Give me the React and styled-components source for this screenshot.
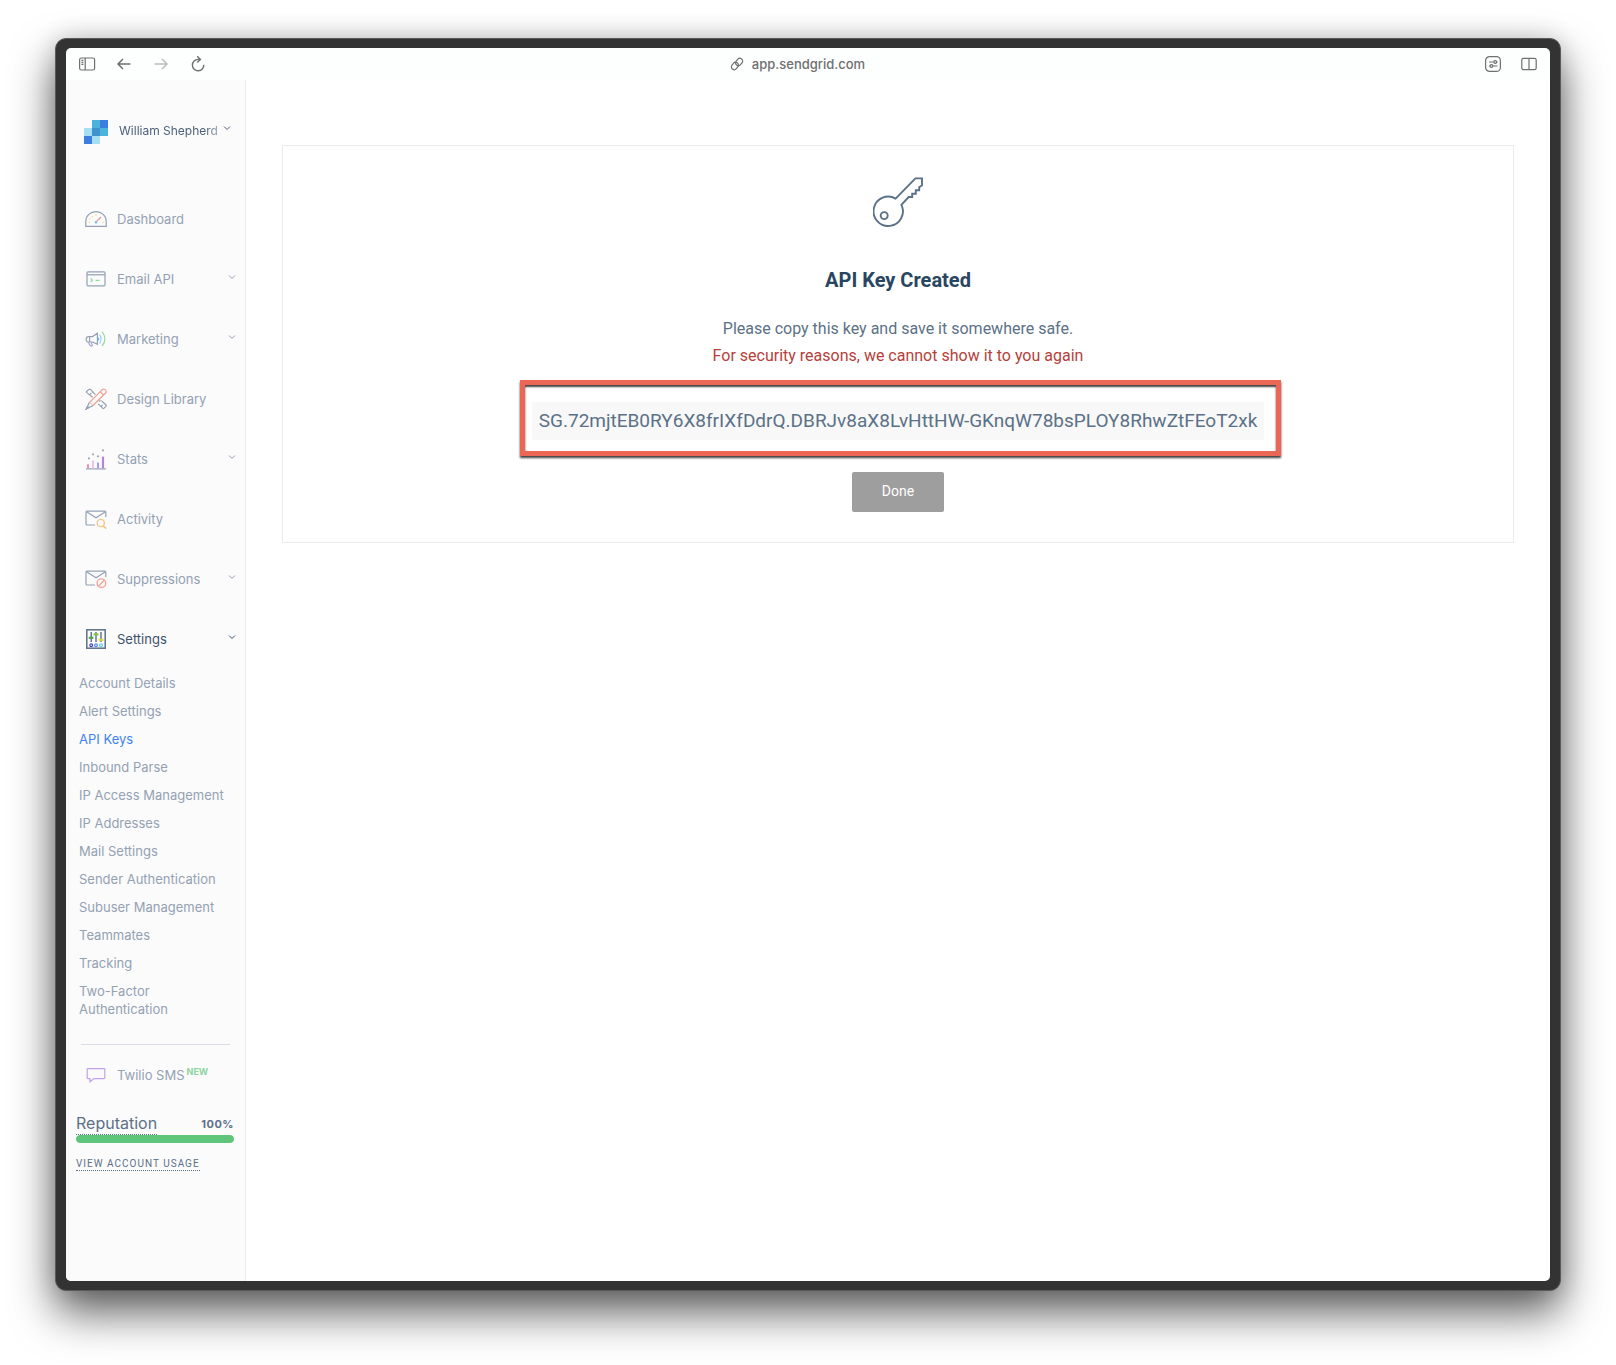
import styled, { createGlobalStyle } from "styled-components";

const colors = {
    text: "#5b7187",
    title: "#294661",
    muted: "#94a1b2",
    line: "#e9ebee",
    link: "#3f83f0",
    danger: "#b7403b",
    green: "#5ec57a",
    chrome: "#6f6f6f",
};

const GlobalStyle = createGlobalStyle`
    *{
        box-sizing: border-box;
    }

    body{
        margin: 0;
        background: #fff;
        color: ${colors.text};
        font-family: Inter, "Liberation Sans", sans-serif;
        font-size: 13px;
        line-height: 18px;
    }

    a{
        color: inherit;
        text-decoration: none;
    }

    button{
        font: inherit;
        color: inherit;
        border: 0;
        padding: 0;
        background: none;
        cursor: pointer;
    }
`;

/* ---------- icons ---------- */

function Icon({ size = 22, children, ...rest }) {
    return (
        <svg
            width={size}
            height={size}
            viewBox={`0 0 ${size} ${size}`}
            fill="none"
            stroke="currentColor"
            strokeWidth="1.2"
            aria-hidden="true"
            {...rest}
        >
            {children}
        </svg>
    );
}

function Chevron() {
    return (
        <svg width="8" height="6" viewBox="0 0 8 6" fill="none" stroke="currentColor" strokeWidth="1" aria-hidden="true">
            <path d="M1 1.500l3 3 3-3" />
        </svg>
    );
}

function DashboardIcon() {
    return (
        <Icon>
            <path d="M.8 18.4v-5C.8 7.6 5.4 3.7 11 3.7s10.2 3.9 10.2 9.7v5z" />
            <path d="M3.6 14.4h1.2M4.4 10.8l1.1.5M6.8 8l.8.9M11 6.2v1.6M18.4 14.4h-1.2" stroke="#f8d27a" />
            <path d="M11.6 13.4L16 9" stroke="#f0938a" />
            <circle cx="11" cy="14.3" r="1" fill="#7db0f7" stroke="#7db0f7" strokeWidth=".6" />
        </Icon>
    );
}

function EmailApiIcon() {
    return (
        <Icon>
            <rect x="2" y="3.8" width="18" height="14" rx="1" />
            <path d="M2 6.8h18" />
            <path d="M5.6 10.2l1.8 2-1.8 2M10.6 12.4h4" stroke="#8edb9f" />
        </Icon>
    );
}

function MarketingIcon() {
    return (
        <Icon>
            <path d="M12.4 5.2v11.2L7.6 14H3.4a2.2 2.2 0 0 1-2.2-2.4v-.8a2.2 2.2 0 0 1 2.2-2.2h4.2z" />
            <path d="M4.6 8.8V14" />
            <path d="M3.6 14c.2 2 1.2 3.8 3.2 4.2l.6-.8c-.8-.8-1-2-.8-3.2" stroke="#a5a5d8" />
            <path d="M13 9.6v2.8" stroke="#6ea5f6" strokeWidth="1.8" />
            <path d="M14.6 6.6c1.8 2.8 1.8 6.2 0 9" stroke="#9ad0f4" />
            <path d="M17 3.6c3.6 4.6 3.6 10.2 0 14.6" stroke="#8edb9f" />
        </Icon>
    );
}

function DesignIcon() {
    return (
        <Icon>
            <path d="M7.6 9.2L1.8 4.6c-.5-.5-.5-.9 0-1.300L4 1.400c.5-.4 1-.4 1.400 0l5 5.200M4.400 6.800l1.800-1.600M13.200 15.800l4.400 4.400c.5.5 1 .5 1.500 0l1.800-1.900c.5-.5.5-1 0-1.500l-4.600-4.200M16 18.600l1.600-1.800M14 13.600l1.400-1.400M7 4.600l1.200-1.200" />
            <path d="M17 1.800L4.400 14.600l3.200 3.200L20.600 5c.8-.9.8-2 0-3s-2.600-1-3.600-.2zM15.200 3.600l3.400 3.400" stroke="#f0a090" fill="#fbfbfc" />
            <path d="M4.400 14.600L1.200 21l6.400-3.200" fill="#fbfbfc" />
            <path d="M1.200 21l1.400-2.600 1.200 1.200z" />
        </Icon>
    );
}

function StatsIcon() {
    return (
        <Icon>
            <path d="M1 20.9h20" stroke="#94a1b2" />
            <path d="M3 20.4v-4.2" stroke="#ee8fb2" strokeWidth="2" />
            <path d="M8 20.4v-8" stroke="#e6c4ee" strokeWidth="2" />
            <path d="M13 20.4v-6" stroke="#a598f7" strokeWidth="2" />
            <path d="M18 20.4V8.6" stroke="#b586d0" strokeWidth="2.2" />
            <path d="M3 10.4h1.8M7.1 6.4h1.8M12.1 8.4h1.8M17.1 2.4h1.8" strokeWidth="1.6" />
        </Icon>
    );
}

function MailBase() {
    return (
        <>
            <path d="M10 17H2c-.6 0-1-.4-1-1V4.2c0-.6.4-1 1-1h17.8c.6 0 1 .4 1 1V9" />
            <path d="M1.6 3.8L11 9.8l9.400-6" />
        </>
    );
}

function ActivityIcon() {
    return (
        <Icon>
            <MailBase />
            <circle cx="15.8" cy="15" r="3.6" stroke="#f3c98a" strokeWidth="1.4" />
            <path d="M18.2 17.6l3 3" stroke="#f3c98a" strokeWidth="1.6" />
        </Icon>
    );
}

function SuppressionsIcon() {
    return (
        <Icon>
            <MailBase />
            <circle cx="16.4" cy="15.2" r="4.3" stroke="#f2a594" strokeWidth="1.4" />
            <path d="M13.4 18.2l6-6" stroke="#f2a594" strokeWidth="1.4" />
        </Icon>
    );
}

function SettingsIcon() {
    return (
        <Icon>
            <rect x="1.8" y="1.8" width="18.4" height="18.4" stroke="#5d7288" strokeWidth="1.5" />
            <path d="M6.2 4v10M11 4v10M16 4v10" stroke="#42586f" strokeWidth="1.2" />
            <path d="M3.8 9.8h4.6" stroke="#4ea557" strokeWidth="2.2" />
            <path d="M8.6 6.4h4.8" stroke="#86c440" strokeWidth="2.2" />
            <path d="M13.6 11.8h4.8" stroke="#d5dc46" strokeWidth="2.2" />
            <circle cx="6.2" cy="17.2" r="1.4" stroke="#4546c0" />
            <circle cx="11" cy="17.2" r="1.4" stroke="#4f8ef0" />
            <circle cx="16" cy="17.2" r="1.4" stroke="#66cdf0" />
        </Icon>
    );
}

function SmsIcon() {
    return (
        <Icon stroke="#c0a2ec">
            <path d="M3 4.6h16c.5 0 .8.3.8.8v8.4c0 .5-.3.8-.8.8H9l-4 3.2v-3.2H3c-.5 0-.8-.3-.8-.8V5.400c0-.5.3-.8.8-.8z" />
        </Icon>
    );
}

function KeyIcon() {
    return (
        <svg width="50" height="50" viewBox="0 0 50 50" fill="none" stroke={colors.text} strokeWidth="1.9" aria-hidden="true">
            <path d="M22.600 21.600L42.400 1.400H49v6.800l-2.800 2v3h-3.400v3.600h-3.600v3.200h-3.600L28.400 27.800A14.700 14.700 0 1 1 22.600 21.600z" />
            <circle cx="11.2" cy="38.6" r="3.5" />
        </svg>
    );
}

function Logo() {
    return (
        <svg width="24" height="24" viewBox="0 0 24 24" aria-label="SendGrid" role="img" shapeRendering="crispEdges">
            <path d="M0 8h8v8H0zM8 16h8v8H8z" fill="#a4dff2" />
            <path d="M8 0h8v8H8zM16 8h8v8h-8z" fill="#4cb3dc" />
            <path d="M16 0h8v8h-8zM0 16h8v8H0z" fill="#3c7de0" />
            <path d="M8 8h8v8H8z" fill="#3f93d0" />
        </svg>
    );
}

/* ---------- browser toolbar ---------- */

function Toolbar() {
    return (
        <Chrome>
            <ChromeGroup>
                <ChromeButton aria-label="Toggle sidebar">
                    <Icon size={18}>
                        <rect x="1.6" y="3" width="15" height="12" rx="1.8" />
                        <path d="M7.2 3v12M3.4 5.4h2M3.4 7.4h2M3.4 9.4h2" />
                    </Icon>
                </ChromeButton>
                <ChromeButton aria-label="Back">
                    <Icon size={18} strokeWidth="1.5">
                        <path d="M15.4 9H3M8 4L3 9l5 5" />
                    </Icon>
                </ChromeButton>
                <ChromeButton aria-label="Forward" $faded>
                    <Icon size={18} strokeWidth="1.5">
                        <path d="M2.6 9H15M10 4l5 5-5 5" />
                    </Icon>
                </ChromeButton>
                <ChromeButton aria-label="Reload">
                    <Icon size={18} strokeWidth="1.4">
                        <path d="M14.8 9.8a5.700 5.700 0 1 1-5.700-5.400h2.200M8.200 1.200l3.200 3.200-3.200 3.200" />
                    </Icon>
                </ChromeButton>
            </ChromeGroup>

            <Address>
                <Icon size={14}>
                    <rect x="-3.9" y="-2.8" width="7.8" height="5.6" rx="2.8" transform="translate(4.9 9) rotate(-50)" />
                    <rect x="-3.9" y="-2.8" width="7.8" height="5.6" rx="2.8" transform="translate(9.1 5) rotate(-50)" />
                </Icon>
                <span>app.sendgrid.com</span>
            </Address>

            <ChromeGroup $end>
                <ChromeButton aria-label="Page settings">
                    <Icon size={18}>
                        <rect x="1.6" y="1.6" width="14.8" height="14.8" rx="4" />
                        <path d="M5 7h4.6M12.800 7h.8M5 11h.8M9 11h4.400" />
                        <circle cx="11.2" cy="7" r="1.4" />
                        <circle cx="7.4" cy="11" r="1.4" />
                    </Icon>
                </ChromeButton>
                <ChromeButton aria-label="Split view">
                    <Icon size={18}>
                        <rect x="1.8" y="3.4" width="14.4" height="11.2" rx="1.6" />
                        <path d="M9 3.4v11.2" />
                    </Icon>
                </ChromeButton>
            </ChromeGroup>
        </Chrome>
    );
}

/* ---------- sidebar ---------- */

const menu = [
    { label: "Dashboard", icon: DashboardIcon },
    { label: "Email API", icon: EmailApiIcon, more: true },
    { label: "Marketing", icon: MarketingIcon, more: true },
    { label: "Design Library", icon: DesignIcon },
    { label: "Stats", icon: StatsIcon, more: true },
    { label: "Activity", icon: ActivityIcon },
    { label: "Suppressions", icon: SuppressionsIcon, more: true },
    { label: "Settings", icon: SettingsIcon, more: true, active: true },
];

const settings = [
    "Account Details",
    "Alert Settings",
    "API Keys",
    "Inbound Parse",
    "IP Access Management",
    "IP Addresses",
    "Mail Settings",
    "Sender Authentication",
    "Subuser Management",
    "Teammates",
    "Tracking",
    "Two-Factor Authentication",
];

function Sidebar() {
    const reputation = 100;

    return (
        <Side>
            <Account>
                <Logo />
                <AccountName>William Shepherd</AccountName>
                <Chevron />
            </Account>

            <nav>
                {menu.map(({ label, icon: ItemIcon, more, active }) => (
                    <MenuItem key={label} href="#" $active={active}>
                        <ItemIcon />
                        <MenuLabel>{label}</MenuLabel>
                        {more && <Chevron />}
                    </MenuItem>
                ))}

                <SubMenu>
                    {settings.map((label) => (
                        <li key={label}>
                            <SubItem href="#" $active={label === "API Keys"}>{label}</SubItem>
                        </li>
                    ))}
                </SubMenu>

                <Divider />

                <MenuItem href="#">
                    <SmsIcon />
                    <MenuLabel>
                        Twilio SMS<New>NEW</New>
                    </MenuLabel>
                </MenuItem>
            </nav>

            <Reputation>
                <ReputationHead>
                    <ReputationTitle>Reputation</ReputationTitle>
                    <Percent>{reputation}%</Percent>
                </ReputationHead>
                <Bar>
                    <BarFill style={{ width: `${reputation}%` }} />
                </Bar>
                <Usage href="#">View account usage</Usage>
            </Reputation>
        </Side>
    );
}

/* ---------- page ---------- */

export default function App() {
    return (
        <Desktop>
            <GlobalStyle />
            <Window>
                <Toolbar />
                <Body>
                    <Sidebar />
                    <Main>
                        <Card>
                            <KeyIcon />
                            <Title>API Key Created</Title>
                            <Message>Please copy this key and save it somewhere safe.</Message>
                            <Message $danger>For security reasons, we cannot show it to you again</Message>
                            <ApiKey>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</ApiKey>
                            <Done>Done</Done>
                        </Card>
                    </Main>
                </Body>
            </Window>
        </Desktop>
    );
}

const Desktop = styled.div`
    display: flex;
    min-height: 100vh;
    padding: 38px 55px 74px;
`;

const Window = styled.div`
    flex: 1;
    display: flex;
    flex-direction: column;
    padding: 9px 10px;
    border: 1px solid #5a5a5a;
    border-radius: 11px;
    background: #333;
    box-shadow: 0 22px 44px rgba(0, 0, 0, 0.62), 0 0 24px rgba(0, 0, 0, 0.16);
`;

const Chrome = styled.header`
    display: grid;
    grid-template-columns: 1fr auto 1fr;
    align-items: center;
    height: 32px;
    padding: 0 12px;
    border-radius: 5px 5px 0 0;
    background: #fdfefe;
    color: ${colors.chrome};
`;

const ChromeGroup = styled.div`
    display: flex;
    gap: ${(props) => (props.$end ? "18px" : "19px")};
    justify-content: ${(props) => (props.$end ? "flex-end" : "flex-start")};
`;

const ChromeButton = styled.button`
    display: flex;
    opacity: ${(props) => (props.$faded ? 0.45 : 1)};
`;

const Address = styled.div`
    display: flex;
    align-items: center;
    gap: 8px;
    padding-right: 21px;
    font-weight: 500;
`;

const Body = styled.div`
    flex: 1;
    display: flex;
    border-radius: 0 0 5px 5px;
    background: #fff;
    overflow: hidden;
`;

const Side = styled.aside`
    flex: none;
    width: 180px;
    background: #fbfbfc;
    border-right: 1px solid ${colors.line};
`;

const Account = styled.button`
    display: flex;
    align-items: flex-start;
    width: 100%;
    padding: 40px 14px 45px 18px;
    text-align: left;
    color: #4d6179;

    > svg:last-child{
        margin-top: 5px;
    }
`;

const AccountName = styled.span`
    flex: 1;
    margin: 2px 2px 0 11px;
    font-size: 12px;
    white-space: nowrap;
    mask-image: linear-gradient(to right, #000 85%, rgba(0, 0, 0, 0.4));
`;

const MenuItem = styled.a`
    display: flex;
    align-items: center;
    height: 60px;
    padding: 0 9px 0 19px;
    color: ${(props) => (props.$active ? "#3d5168" : colors.muted)};

    > svg:last-child{
        margin-bottom: 4px;
    }
`;

const MenuLabel = styled.span`
    flex: 1;
    margin-left: 10px;
`;

const New = styled.sup`
    margin-left: 2px;
    font-size: 9px;
    font-weight: 700;
    line-height: 1;
    color: #8ed5a0;
`;

const SubMenu = styled.ul`
    list-style: none;
    margin: 0;
    padding: 0 14px 0 13px;
`;

const SubItem = styled.a`
    display: block;
    padding: 5px 0;
    color: ${(props) => (props.$active ? colors.link : colors.muted)};
`;

const Divider = styled.hr`
    height: 1px;
    margin: 21px 15px 0;
    border: 0;
    background: #d9dce8;
`;

const Reputation = styled.section`
    padding: 7px 11px 0 10px;
`;

const ReputationHead = styled.div`
    display: flex;
    justify-content: space-between;
    align-items: center;
`;

const ReputationTitle = styled.span`
    font-size: 16px;
    line-height: 22px;
    border-bottom: 1px dotted ${colors.text};
`;

const Percent = styled.span`
    font-size: 11px;
    font-weight: 700;
    letter-spacing: 0.5px;
`;

const Bar = styled.div`
    height: 8px;
    border-radius: 4px;
    background: ${colors.line};
    overflow: hidden;
`;

const BarFill = styled.div`
    height: 100%;
    border-radius: 4px;
    background: ${colors.green};
`;

const Usage = styled.a`
    display: inline-block;
    margin-top: 14px;
    font-family: Roboto, sans-serif;
    font-size: 10px;
    line-height: 13px;
    letter-spacing: 1px;
    text-transform: uppercase;
    border-bottom: 1px dotted ${colors.text};
`;

const Main = styled.main`
    flex: 1;
    padding: 65px 36px;
`;

const Card = styled.section`
    display: flex;
    flex-direction: column;
    align-items: center;
    padding: 31px 20px 30px;
    border: 1px solid ${colors.line};
    font-family: Roboto, sans-serif;
`;

const Title = styled.h1`
    margin: 40px 0 22px;
    font-size: 20px;
    font-weight: 700;
    line-height: 26px;
    color: ${colors.title};
`;

const Message = styled.p`
    margin: 0;
    font-size: 16px;
    line-height: 27px;
    color: ${(props) => (props.$danger ? colors.danger : colors.text)};
`;

const ApiKey = styled.div`
    position: relative;
    margin: 33px 0 32px;
    padding: 6px 7px;
    font-size: 19px;
    line-height: 26px;
    background: #f8f8f8;

    /* highlight frame round the key */
    &::after{
        content: "";
        position: absolute;
        inset: -22px -17px -16px -12px;
        border: 5px solid #ec6656;
        box-shadow: 0 2px 2px rgba(0, 0, 0, 0.75), inset 0 2px 2px rgba(0, 0, 0, 0.75);
    }
`;

const Done = styled.button`
    height: 40px;
    padding: 0 30px 2px;
    border-radius: 2px;
    background: #9e9e9e;
    color: #fff;
    font-size: 14px;
`;
